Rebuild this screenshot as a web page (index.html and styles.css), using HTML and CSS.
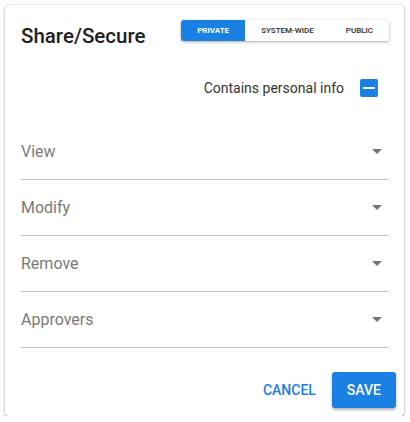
FILE: index.html
```html
<!DOCTYPE html>
<html>
<head>
<meta charset="utf-8">
<link rel="stylesheet" href="styles.css">
</head>
<body>
<div class="card">
  <div class="header">
    <h1 class="title">Share/Secure</h1>
    <div class="toggle-group">
      <button class="toggle active">Private</button>
      <button class="toggle">System-wide</button>
      <button class="toggle">Public</button>
    </div>
  </div>
  <div class="check-row">
    <span class="check-label">Contains personal info</span>
    <span class="checkbox"><span class="dash"></span></span>
  </div>
  <div class="fields">
    <div class="field"><span class="field-label">View</span><span class="arrow"></span></div>
    <div class="field"><span class="field-label">Modify</span><span class="arrow"></span></div>
    <div class="field"><span class="field-label">Remove</span><span class="arrow"></span></div>
    <div class="field"><span class="field-label">Approvers</span><span class="arrow"></span></div>
  </div>
  <div class="actions">
    <button class="btn btn-text">Cancel</button>
    <button class="btn btn-primary">Save</button>
  </div>
</div>
</body>
</html>
```
FILE: styles.css
```css
html, body {
  margin: 0;
  padding: 0;
  background: #ffffff;
  font-family: Roboto, "Liberation Sans", sans-serif;
}

.card {
  box-sizing: border-box;
  width: 399px;
  height: 411px;
  margin: 5px 0 0 5px;
  padding: 15px 15px 0 16px;
  background: #fff;
  border-radius: 4px;
  box-shadow: 0 1px 3px rgba(0,0,0,0.35), 0 0 1px rgba(0,0,0,0.25);
}

.header {
  display: flex;
  justify-content: space-between;
  align-items: flex-start;
}

.title {
  margin: 4px 0 0 0;
  font-size: 20.5px;
  line-height: 24px;
  font-weight: 500;
  color: #212121;
}

.toggle-group {
  display: flex;
  height: 21px;
  border-radius: 3px;
  overflow: hidden;
  box-shadow: 0 1px 3px rgba(0,0,0,0.35);
  background: #fff;
}

.toggle {
  border: none;
  margin: 0;
  padding: 0 16px;
  height: 21px;
  background: #fff;
  color: #2b2b2b;
  font-family: Roboto, "Liberation Sans", sans-serif;
  font-size: 8px;
  font-weight: 500;
  text-transform: uppercase;
}

.toggle.active {
  background: #1a80e3;
  color: #fff;
  font-weight: 700;
}

.check-row {
  display: flex;
  justify-content: flex-end;
  align-items: center;
  gap: 16px;
  margin-top: 31px;
  padding-right: 11px;
  height: 18px;
}

.check-label {
  font-size: 14px;
  color: #333;
}

.checkbox {
  width: 18px;
  height: 18px;
  border-radius: 2px;
  background: #1a80e3;
  display: flex;
  align-items: center;
  justify-content: center;
}

.dash {
  width: 12px;
  height: 2px;
  background: #fff;
}

.fields {
  margin-top: 27px;
}

.field {
  box-sizing: border-box;
  height: 56px;
  display: flex;
  align-items: center;
  justify-content: space-between;
  border-bottom: 1px solid #c4c4c4;
  padding: 0 7px 0 0;
}

.field-label {
  font-size: 16px;
  color: #7a7a7a;
}

.arrow {
  width: 0;
  height: 0;
  border-left: 5px solid transparent;
  border-right: 5px solid transparent;
  border-top: 5px solid #757575;
}

.actions {
  display: flex;
  justify-content: flex-end;
  margin-top: 24px;
  margin-right: -7px;
}

.btn {
  border: none;
  height: 36px;
  padding: 0 16px;
  font-family: Roboto, "Liberation Sans", sans-serif;
  font-size: 14px;
  font-weight: 500;
  text-transform: uppercase;
  border-radius: 3px;
  background: transparent;
}

.btn-text {
  color: #1a80e3;
}

.btn-primary {
  background: #1a80e3;
  color: #fff;
  min-width: 64px;
  padding: 0 15px;
  box-shadow: 0 2px 3px rgba(0,0,0,0.3);
}
```
